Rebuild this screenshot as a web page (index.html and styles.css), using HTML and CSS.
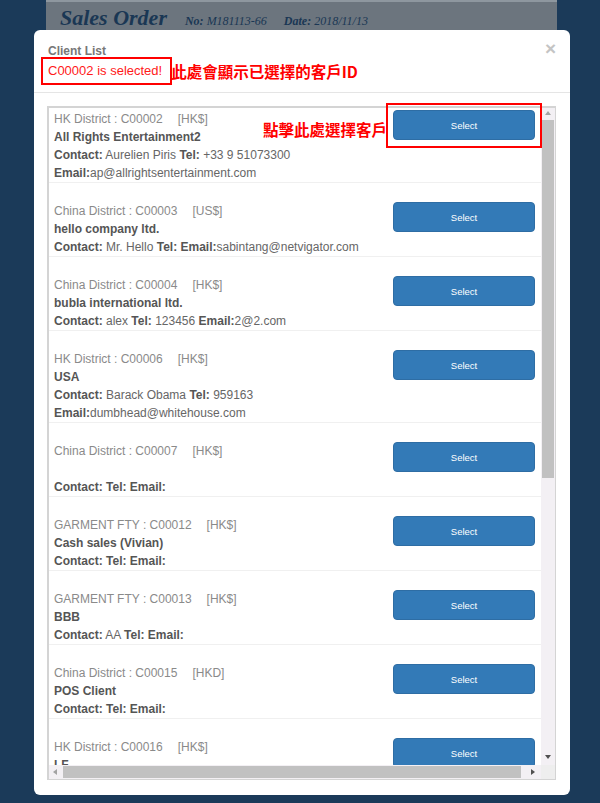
FILE: index.html
```html
<!DOCTYPE html>
<html lang="zh-Hant">
    <head>
        <meta charset="utf-8">
        <title>Sales Order - Client List</title>
        <link rel="stylesheet" href="styles.css">
    </head>
    <body>
        <div id="sheet">
            <h1 class="orderTitle">Sales Order</h1>
            <span class="orderMeta"><b>No:</b> M181113-66</span>
            <span class="orderMeta"><b>Date:</b> 2018/11/13</span>
        </div>

        <div id="clientModal">
            <div class="modalHeader">
                <div class="headerTop">
                    <span class="modalTitle">Client List</span>
                    <span class="closeBtn">&times;</span>
                </div>
                <div class="selectedLine">
                    <span class="selectedBox">C00002 is selected!</span><span class="noteText">此處會顯示已選擇的客戶ID</span>
                </div>
            </div>

            <div class="modalBody">
                <div class="listBox">
                    <div class="listView">

                        <div class="clientRow firstRow">
                            <div class="clientInfo">
                                <div class="district">HK District : C00002<span class="currency">[HK$]</span></div>
                                <div class="clientName">All Rights Entertainment2</div>
                                <div class="clientContact"><b>Contact:</b> Aurelien Piris <b>Tel:</b> +33 9 51073300 <b>Email:</b>ap@allrightsentertainment.com</div>
                            </div>
                            <button class="selectBtn">Select</button>
                        </div>

                        <div class="clientRow">
                            <div class="clientInfo">
                                <div class="district">China District : C00003<span class="currency">[US$]</span></div>
                                <div class="clientName">hello company ltd.</div>
                                <div class="clientContact"><b>Contact:</b> Mr. Hello <b>Tel:</b> <b>Email:</b>sabintang@netvigator.com</div>
                            </div>
                            <button class="selectBtn">Select</button>
                        </div>

                        <div class="clientRow">
                            <div class="clientInfo">
                                <div class="district">China District : C00004<span class="currency">[HK$]</span></div>
                                <div class="clientName">bubla international ltd.</div>
                                <div class="clientContact"><b>Contact:</b> alex <b>Tel:</b> 123456 <b>Email:</b>2@2.com</div>
                            </div>
                            <button class="selectBtn">Select</button>
                        </div>

                        <div class="clientRow">
                            <div class="clientInfo">
                                <div class="district">HK District : C00006<span class="currency">[HK$]</span></div>
                                <div class="clientName">USA</div>
                                <div class="clientContact"><b>Contact:</b> Barack Obama <b>Tel:</b> 959163 <b>Email:</b>dumbhead@whitehouse.com</div>
                            </div>
                            <button class="selectBtn">Select</button>
                        </div>

                        <div class="clientRow">
                            <div class="clientInfo">
                                <div class="district">China District : C00007<span class="currency">[HK$]</span></div>
                                <div class="clientName">&nbsp;</div>
                                <div class="clientContact"><b>Contact:</b> <b>Tel:</b> <b>Email:</b></div>
                            </div>
                            <button class="selectBtn">Select</button>
                        </div>

                        <div class="clientRow">
                            <div class="clientInfo">
                                <div class="district">GARMENT FTY : C00012<span class="currency">[HK$]</span></div>
                                <div class="clientName">Cash sales (Vivian)</div>
                                <div class="clientContact"><b>Contact:</b> <b>Tel:</b> <b>Email:</b></div>
                            </div>
                            <button class="selectBtn">Select</button>
                        </div>

                        <div class="clientRow">
                            <div class="clientInfo">
                                <div class="district">GARMENT FTY : C00013<span class="currency">[HK$]</span></div>
                                <div class="clientName">BBB</div>
                                <div class="clientContact"><b>Contact:</b> AA <b>Tel:</b> <b>Email:</b></div>
                            </div>
                            <button class="selectBtn">Select</button>
                        </div>

                        <div class="clientRow">
                            <div class="clientInfo">
                                <div class="district">China District : C00015<span class="currency">[HKD]</span></div>
                                <div class="clientName">POS Client</div>
                                <div class="clientContact"><b>Contact:</b> <b>Tel:</b> <b>Email:</b></div>
                            </div>
                            <button class="selectBtn">Select</button>
                        </div>

                        <div class="clientRow">
                            <div class="clientInfo">
                                <div class="district">HK District : C00016<span class="currency">[HK$]</span></div>
                                <div class="clientName">LF</div>
                                <div class="clientContact"><b>Contact:</b> <b>Tel:</b> <b>Email:</b></div>
                            </div>
                            <button class="selectBtn">Select</button>
                        </div>

                    </div>

                    <div class="vScroll">
                        <span class="arrow arrowUp"></span>
                        <div class="vTrack"><div class="vThumb"></div></div>
                        <span class="arrow arrowDown"></span>
                    </div>

                    <div class="hScroll">
                        <span class="arrow arrowLeft"></span>
                        <div class="hTrack"><div class="hThumb"></div></div>
                        <span class="arrow arrowRight"></span>
                    </div>

                    <div class="scrollCorner"></div>
                </div>
            </div>

            <!-- annotation over the first select button -->
            <div class="btnNote">點擊此處選擇客戶</div>
            <div class="btnNoteBox"></div>
        </div>
    </body>
</html>
```

FILE: styles.css
```css
body {
    margin: 0;
    height: 803px;
    overflow: hidden;
    background-color: #1b3a59;
    font-family: "Liberation Sans", Arial, "Noto Sans CJK TC", sans-serif;
}

#sheet {
    width: 511px;
    height: 760px;
    margin-left: 46px;
    box-sizing: border-box;
    padding: 5px 0 0 14px;
    border-top: 2px solid #8e979f;
    background-color: #6c757e;
    font-family: "Liberation Serif", "Times New Roman", serif;
    font-style: italic;
    color: #1a3754;
}

.orderTitle {
    display: inline-block;
    margin: 0 14px 0 0;
    font-size: 22px;
    font-weight: bold;
    line-height: 22px;
}

.orderMeta {
    margin-right: 13px;
    font-size: 12px;
}

/* modal window */

#clientModal {
    position: absolute;
    top: 30px;
    left: 34px;
    width: 536px;
    height: 765px;
    box-sizing: border-box;
    background-color: #ffffff;
    border-radius: 6px;
}

.modalHeader {
    padding: 13px 14px 7px 14px;
    border-bottom: 1px solid #e5e5e5;
}

.headerTop {
    display: flex;
    justify-content: space-between;
    align-items: center;
    height: 16px;
}

.modalTitle {
    font-size: 12px;
    font-weight: bold;
    color: #777777;
}

.closeBtn {
    font-size: 19px;
    font-weight: bold;
    color: #c4c4c4;
    margin-top: -4px;
}

.selectedLine {
    display: flex;
    align-items: center;
    margin-top: -2px;
}

.selectedBox {
    display: inline-block;
    margin-left: -7px;
    padding: 4px 8px 4px 5px;
    border: 2px solid #ff0000;
    font-size: 13px;
    line-height: 16px;
    color: #ff1a1a;
}

.noteText,
.btnNote {
    font-size: 15.5px;
    font-weight: bold;
    color: #ff0000;
    font-family: "Noto Sans CJK TC", sans-serif;
    line-height: 18px;
}

.noteText {
    margin-left: -1px;
}

.btnNote {
    position: absolute;
    left: 229px;
    top: 90px;
}

.btnNoteBox {
    position: absolute;
    left: 352px;
    top: 73px;
    width: 156px;
    height: 45px;
    box-sizing: border-box;
    border: 2px solid #ff0000;
}

/* list */

.modalBody {
    padding: 13px 14px 14px 13px;
}

.listBox {
    display: grid;
    grid-template-columns: 1fr 14px;
    grid-template-rows: 1fr 14px;
    height: 674px;
    box-sizing: border-box;
    border: 2px solid #d4d4d4;
    border-right-width: 1px;
    border-bottom-width: 1px;
}

.listView {
    overflow: hidden;
}

.clientRow {
    display: flex;
    justify-content: space-between;
    align-items: flex-start;
    padding: 19px 6px 0 5px;
    border-bottom: 1px solid #f0f0f0;
}

.firstRow {
    padding-top: 2px;
}

.clientInfo {
    width: 336px;
    font-size: 12px;
    line-height: 18px;
    color: #666666;
}

.district {
    color: #8a8a8a;
}

.currency {
    margin-left: 15px;
}

.clientName {
    font-weight: bold;
    color: #555555;
}

.clientContact b {
    color: #555555;
}

.selectBtn {
    width: 142px;
    height: 30px;
    border: 1px solid #2e6da4;
    border-radius: 4px;
    background-color: #337ab7;
    color: #ffffff;
    font-family: "Liberation Sans", Arial, sans-serif;
    font-size: 9.5px;
}

/* fake scrollbars */

.vScroll {
    display: flex;
    flex-direction: column;
    align-items: center;
    background-color: #f3f0f4;
}

.vTrack {
    flex: 1;
    width: 12px;
    padding-top: 2px;
}

.vThumb {
    width: 12px;
    height: 358px;
    background-color: #c1c1c1;
}

.hScroll {
    display: flex;
    align-items: center;
    background-color: #f3f0f4;
}

.hTrack {
    flex: 1;
    height: 12px;
    padding-left: 3px;
}

.hThumb {
    width: 458px;
    height: 12px;
    background-color: #c1c1c1;
}

.scrollCorner {
    background-color: #eeeeee;
}

.arrow {
    width: 0;
    height: 0;
    border: 3px solid transparent;
}

.arrowUp {
    margin: 3px 0 3px;
    border-bottom: 4px solid #a3a3a3;
    border-top-width: 0;
}

.arrowDown {
    margin: 4px 0 6px;
    border-top: 4px solid #505050;
    border-bottom-width: 0;
}

.arrowLeft {
    margin: 0 3px 0 4px;
    border-right: 4px solid #a3a3a3;
    border-left-width: 0;
}

.arrowRight {
    margin: 0 6px 0 6px;
    border-left: 4px solid #505050;
    border-right-width: 0;
}
```
